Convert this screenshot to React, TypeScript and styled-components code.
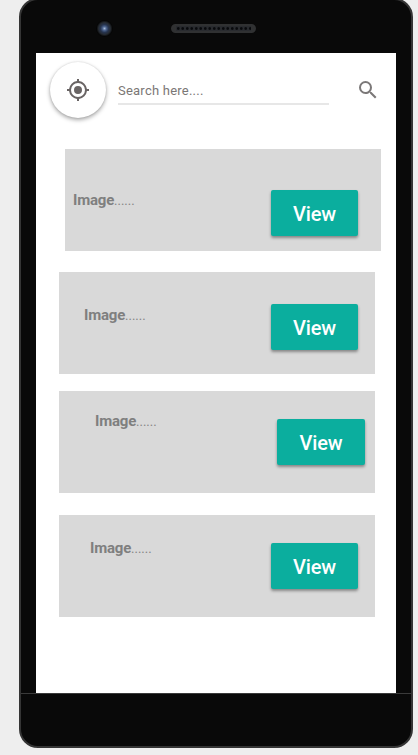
import React from 'react';
import styled, { createGlobalStyle } from 'styled-components';

const GlobalStyle = createGlobalStyle`
  * { box-sizing: border-box; }
  body {
    margin: 0;
    background: #eeeeee;
    font-family: Roboto, "Liberation Sans", sans-serif;
    overflow: hidden;
  }
`;

const Stage = styled.div`
  height: 755px;
  overflow: hidden;
  padding-left: 19px;
`;

const Phone = styled.div`
  width: 394px;
  height: 750px;
  margin-top: -2px;
  background: #090909;
  border: 2px solid #353535;
  border-radius: 19px;
  display: grid;
  grid-template-rows: 53px 640px 1fr;
`;

const TopBezel = styled.header`
  display: flex;
  align-items: center;
  padding: 3px 0 0 75px;
`;

const BottomBezel = styled.footer`
  border-top: 1px solid #3a3a3a;
`;

const Camera = styled.div`
  width: 17px;
  height: 17px;
  border-radius: 50%;
  background: radial-gradient(circle at 50% 50%, #a5b9d5 0, #4b628c 2px, #26344f 4px, #252a31 6px, #050505 8px);
`;

const Speaker = styled.div`
  width: 85px;
  height: 9px;
  margin-left: 58px;
  border-radius: 5px;
  border: 1px solid #303132;
  border-width: 2px 5px;
  background: radial-gradient(circle, #08090c 1px, #292b2f 1.7px) 0 0 / 4.5px 5px;
`;

const Screen = styled.main`
  width: 360px;
  margin-left: 15px;
  background: #fff;
`;

const SearchBar = styled.div`
  display: flex;
  align-items: flex-start;
  height: 96px;
  padding: 9px 0 0 14px;
`;

const LocateButton = styled.button`
  width: 56px;
  height: 56px;
  border: 0;
  padding: 0 1px 1px 0;
  border-radius: 50%;
  background: #fff;
  color: #696464;
  display: grid;
  place-items: center;
  box-shadow: 0 2px 4px rgba(0, 0, 0, 0.35), 0 0 2px rgba(0, 0, 0, 0.12);
`;

const SearchField = styled.label`
  width: 211px;
  height: 34px;
  margin: 9px 0 0 12px;
  padding-top: 11px;
  border-bottom: 2px solid #e7e7e7;
  font-size: 13px;
  line-height: 17px;
  letter-spacing: 0.23px;
  color: #7b7775;
`;

const SearchIcon = styled.svg`
  margin: 16px 0 0 27px;
  fill: #7b7878;
`;

const Card = styled.section<{ $left: number; $gap: number; $inset: number }>`
  display: flex;
  justify-content: space-between;
  align-items: flex-start;
  width: 316px;
  height: 102px;
  margin: ${(p) => p.$gap}px 0 0 ${(p) => p.$left}px;
  padding: 0 ${(p) => p.$inset}px 0 0;
  background: #d9d9d9;
`;

const Caption = styled.span<{ $x: number; $y: number }>`
  margin: ${(p) => p.$y}px 0 0 ${(p) => p.$x}px;
  font-size: 13px;
  line-height: 18px;
  color: #858585;
`;

const Strong = styled.b`
  font-size: 15px;
  font-weight: 700;
  letter-spacing: -0.2px;
  color: #7f7f7f;
`;

const ViewButton = styled.button<{ $top: number; $width: number }>`
  width: ${(p) => p.$width}px;
  height: 46px;
  margin: ${(p) => p.$top}px 0 0;
  padding: 1px 0 0;
  border: 0;
  border-radius: 2px;
  background: #0bae9e;
  color: #fff;
  font: 500 20px/24px Roboto, "Liberation Sans", sans-serif;
  letter-spacing: -0.2px;
  box-shadow: 0 2px 3px rgba(0, 0, 0, 0.38);
`;

const cards = [
  { left: 29, gap: 0, inset: 23, x: 8, y: 42, top: 41, width: 87 },
  { left: 23, gap: 21, inset: 17, x: 25, y: 34, top: 32, width: 87 },
  { left: 23, gap: 17, inset: 10, x: 36, y: 21, top: 28, width: 88 },
  { left: 23, gap: 22, inset: 17, x: 31, y: 24, top: 28, width: 87 },
];

export default function App() {
  return (
    <Stage>
      <GlobalStyle />
      <Phone>
        <TopBezel>
          <Camera />
          <Speaker />
        </TopBezel>
        <Screen>
          <SearchBar>
            <LocateButton aria-label="Locate">
              <svg width="24" height="24" viewBox="0 0 24 24" fill="currentColor">
                <path d="M12 8a4 4 0 1 0 0 8 4 4 0 0 0 0-8zm8.94 3A8.99 8.99 0 0 0 13 3.06V1h-2v2.06A8.99 8.99 0 0 0 3.06 11H1v2h2.06A8.99 8.99 0 0 0 11 20.94V23h2v-2.06A8.99 8.99 0 0 0 20.94 13H23v-2h-2.06zM12 19a7 7 0 1 1 0-14 7 7 0 0 1 0 14z" />
              </svg>
            </LocateButton>
            <SearchField>Search here....</SearchField>
            <SearchIcon width="24" height="24" viewBox="0 0 24 24">
              <path d="M15.5 14h-.79l-.28-.27A6.47 6.47 0 0 0 16 9.5 6.5 6.5 0 1 0 9.5 16c1.61 0 3.09-.59 4.23-1.57l.27.28v.79l5 4.99L20.49 19l-4.99-5zm-6 0a4.5 4.5 0 1 1 0-9 4.5 4.5 0 0 1 0 9z" />
            </SearchIcon>
          </SearchBar>
          {cards.map((c, i) => (
            <Card key={i} $left={c.left} $gap={c.gap} $inset={c.inset}>
              <Caption $x={c.x} $y={c.y}>
                <Strong>Image</Strong>......
              </Caption>
              <ViewButton $top={c.top} $width={c.width}>
                View
              </ViewButton>
            </Card>
          ))}
        </Screen>
        <BottomBezel />
      </Phone>
    </Stage>
  );
}
